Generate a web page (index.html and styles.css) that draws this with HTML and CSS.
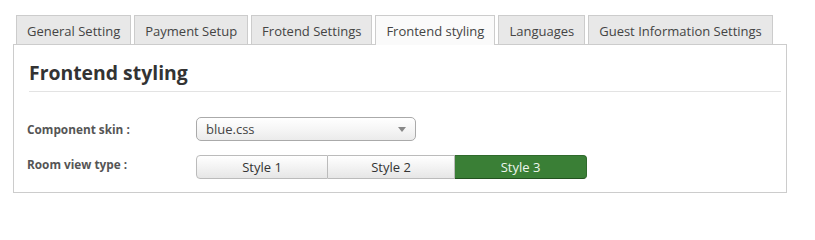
FILE: index.html
```html
<!DOCTYPE html>
<html>
<head>
<meta charset="utf-8">
<link rel="stylesheet" href="styles.css">
</head>
<body>
<div class="wrap">
  <ul class="tabs">
    <li class="tab">General Setting</li>
    <li class="tab">Payment Setup</li>
    <li class="tab">Frotend Settings</li>
    <li class="tab active">Frontend styling</li>
    <li class="tab">Languages</li>
    <li class="tab">Guest Information Settings</li>
  </ul>
  <div class="panel">
    <h2 class="title">Frontend styling</h2>
    <div class="form">
      <div class="row row-skin">
        <label class="label">Component skin :</label>
        <div class="select">
          <span class="select-text">blue.css</span>
          <span class="arrow"></span>
        </div>
      </div>
      <div class="row row-view">
        <label class="label">Room view type :</label>
        <div class="btn-group">
          <span class="btn btn-first">Style 1</span>
          <span class="btn btn-mid">Style 2</span>
          <span class="btn btn-active">Style 3</span>
        </div>
      </div>
    </div>
  </div>
</div>
</body>
</html>
```
FILE: styles.css
```css
* { box-sizing: border-box; }
html, body { margin: 0; padding: 0; background: #fff; }
body { font-family: "Open Sans", "Liberation Sans", sans-serif; color: #333; }

.wrap { padding: 15px 0 0 13px; width: 800px; }

.tabs {
  list-style: none;
  margin: 0 0 0 3px;
  padding: 0;
  display: flex;
  gap: 3px;
  position: relative;
  z-index: 1;
}
.tab {
  font-size: 13px;
  line-height: 18px;
  color: #444;
  padding: 6px 10px 4px;
  background: #e8e8e8;
  border: 1px solid #ccc;
  border-bottom: none;
  white-space: nowrap;
}
.tab.active {
  background: #fafafa;
  margin-bottom: -1px;
  padding-bottom: 5px;
}

.panel {
  width: 774px;
  border: 1px solid #ccc;
  background: #fff;
  padding: 0 5px 13px 13px;
}
.title {
  margin: 15px 0 0 2px;
  font-size: 19.4px;
  line-height: 26px;
  font-weight: 700;
  color: #333;
  padding-bottom: 5px;
  border-bottom: 1px solid #e3e3e3;
}

.form { margin-top: 25px; display: flex; flex-direction: column; gap: 14px; }
.row { display: flex; }
.row-skin { align-items: center; }
.row-view { align-items: flex-start; }
.label {
  width: 169px;
  font-size: 11.8px;
  font-weight: 700;
  color: #555;
  line-height: 16px;
}
.row-view .label { padding-top: 1px; }

.select {
  width: 220px;
  height: 24px;
  border: 1px solid #aaa;
  border-radius: 5px;
  background: linear-gradient(#ffffff 0%, #f6f6f6 50%, #ebebeb 100%);
  display: flex;
  align-items: center;
  justify-content: space-between;
  padding: 0 9px 0 9px;
}
.select-text { font-size: 13px; color: #444; line-height: 18px; }
.arrow {
  width: 0; height: 0;
  border-left: 4px solid transparent;
  border-right: 4px solid transparent;
  border-top: 5px solid #888;
  margin-top: 1px;
}

.btn-group { display: flex; height: 24px; }
.btn {
  display: flex;
  align-items: center;
  justify-content: center;
  font-size: 13px;
  color: #333;
  background: linear-gradient(#ffffff 0%, #f3f3f3 50%, #e6e6e6 100%);
  border: 1px solid #bbb;
  border-left-width: 0;
}
.btn-first { width: 132px; border-left-width: 1px; border-radius: 4px 0 0 4px; }
.btn-mid { width: 127px; }
.btn-active {
  width: 132px;
  background: #3a7f36;
  color: #eef6ee;
  border-color: #2f6a2c;
  border-bottom-color: #22521f;
  border-radius: 0 4px 4px 0;
}
```
